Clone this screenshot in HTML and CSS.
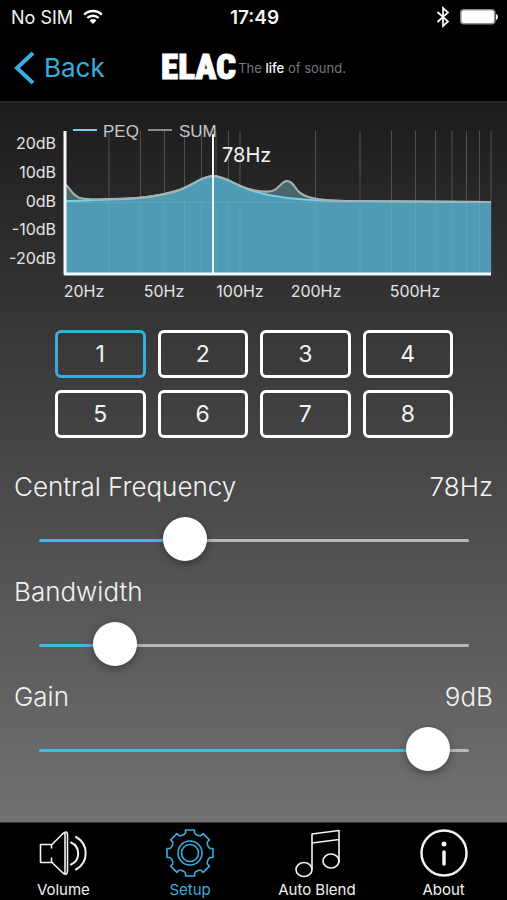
FILE: index.html
```html
<!DOCTYPE html>
<html lang="en">
<head>
  <meta charset="UTF-8">
  <meta name="viewport" content="width=device-width, initial-scale=1.0">
  <title>ELAC - Parametric EQ</title>
  <link rel="stylesheet" href="styles.css">
</head>
<body>
  <div class="status-bar">
    <div class="carrier">
      <span>No SIM</span>
      <svg width="20" height="16" viewBox="0 0 20 16" fill="none" stroke="#fff" stroke-width="2.4">
        <path d="M1.2 5.6a12.6 12.6 0 0 1 17.6 0M4.3 9a8.2 8.2 0 0 1 11.4 0"/>
        <path d="M10 15l-3.4-3.6a4.8 4.8 0 0 1 6.8 0z" fill="#fff" stroke="none"/>
      </svg>
    </div>
    <span class="clock">17:49</span>
    <div class="status-icons">
      <svg width="14" height="22" viewBox="0 0 14 22" fill="none" stroke="#fff" stroke-width="1.7">
        <path d="M1.5 6l10.500 9.500L7 20V2l5 4.500L1.500 16"/>
      </svg>
      <svg width="38" height="16" viewBox="0 0 38 16">
        <rect x="0.800" y="0.800" width="34" height="14" rx="3" fill="#fff" stroke="#8c8c8c" stroke-width="1.600"/>
        <path d="M36 5c2.500 .5 2.500 5.500 0 6z" fill="#fff"/>
      </svg>
    </div>
  </div>

  <header class="nav-bar">
    <a class="back" href="#setup">
      <svg width="22" height="34" viewBox="0 0 22 34" fill="none" stroke="#39aede" stroke-width="4">
        <path d="M19 2L3 17l16 15"/>
      </svg>
      Back
    </a>
    <div class="brand">
      <span class="logo">ELAC</span>
      <span class="slogan">The <b>life</b> of sound.</span>
    </div>
  </header>

  <main>
    <svg class="chart" viewBox="0 0 507 200" role="img" aria-label="Frequency response">
      <!-- frequency grid, log scale 20Hz - 1kHz -->
      <path class="grid" d="M109 21v142M140.500 21v142M164.500 21v142M184.500 21v142M201.500 21v142M216 21v142M228.500 21v142M240 21v142M315.500 21v142M360 21v142M391.500 21v142M415.500 21v142M435.500 21v142M452 21v142M466.500 21v142M479.500 21v142M491 21v142"/>

      <path class="sum-fill" d="M65 74C71 79 73 87 82 88.500C92 90 105 89 109 89C135 89 160 86 176 81C193 76 201 66 213 66C226 66 234 76 253 80C263 82 271 83 276 79C281 75 283 71 287 71C292 71 294 76 298 81C304 88 318 90 345 91L491 92V163H65z"/>
      <path class="peq-fill" d="M65 91C80 91 95 90 109 89.500C135 89 160 86 176 81C193 76 201 66 213 66C226 66 234 75 253 81C275 88 310 91 345 91L491 92V163H65z"/>
      <path class="grid over" d="M109 91v72M140.500 91v72M164.500 91v72M184.500 91v72M201.500 91v72M216 91v72M228.500 91v72M240 91v72M315.500 91v72M360 91v72M391.500 91v72M415.500 91v72M435.500 91v72M452 91v72M466.500 91v72M479.500 91v72M65 92.500h426"/>
      <path class="peq-line" d="M65 91C80 91 95 90 109 89.500C135 89 160 86 176 81C193 76 201 66 213 66C226 66 234 75 253 81C275 88 310 91 345 91L491 92"/>
      <path class="sum-line" d="M65 74C71 79 73 87 82 88.500C92 90 105 89 109 89C135 89 160 86 176 81C193 76 201 66 213 66C226 66 234 76 253 80C263 82 271 83 276 79C281 75 283 71 287 71C292 71 294 76 298 81C304 88 318 90 345 91L491 92"/>

      <!-- axes and the selected frequency -->
      <path class="axis" d="M65 21V164H491"/>
      <path class="marker" d="M213 24V164"/>

      <path class="key-peq" d="M73 20h24"/>
      <text class="key" x="103" y="27">PEQ</text>
      <path class="key-sum" d="M148 20h24"/>
      <text class="key" x="179" y="27">SUM</text>
      <text class="marker-label" x="222" y="52">78Hz</text>

      <g class="y-labels">
        <text x="56" y="39">20dB</text>
        <text x="56" y="68">10dB</text>
        <text x="56" y="97">0dB</text>
        <text x="56" y="125">-10dB</text>
        <text x="56" y="154">-20dB</text>
      </g>
      <g class="x-labels">
        <text x="84" y="187">20Hz</text>
        <text x="164" y="187">50Hz</text>
        <text x="240" y="187">100Hz</text>
        <text x="316" y="187">200Hz</text>
        <text x="415" y="187">500Hz</text>
      </g>
    </svg>

    <div class="bands">
      <button class="active">1</button>
      <button>2</button>
      <button>3</button>
      <button>4</button>
      <button>5</button>
      <button>6</button>
      <button>7</button>
      <button>8</button>
    </div>

    <div class="control">
      <div class="control-head">
        <label for="frequency">Central Frequency</label>
        <output for="frequency">78Hz</output>
      </div>
      <input type="range" id="frequency" min="0" max="100" value="32" style="--fill: 33%">
    </div>
    <div class="control">
      <div class="control-head">
        <label for="bandwidth">Bandwidth</label>
      </div>
      <input type="range" id="bandwidth" min="0" max="100" value="14" style="--fill: 18%">
    </div>
    <div class="control">
      <div class="control-head">
        <label for="gain">Gain</label>
        <output for="gain">9dB</output>
      </div>
      <input type="range" id="gain" min="0" max="100" value="95" style="--fill: 91%">
    </div>
  </main>

  <nav class="tab-bar">
    <a href="#volume">
      <svg viewBox="0 0 50 50">
        <path d="M13.500 20V16.500H2.500V34.500H13.500V30M13.500 17L25 5.500Q29.500 2 29.500 7V43Q29.500 48 25 45L13.500 34M27 5v40"/>
        <path d="M33 14.500a12 12 0 0 1 0 22M38 9a18.500 18.500 0 0 1 0 32.500" stroke-width="2"/>
      </svg>
      Volume
    </a>
    <a href="#setup" class="active">
      <svg viewBox="-25 -25 50 50">
        <path d="M-6-18.500L-4.500-20V-23H4.500V-20L6-18.500L8.800-17.300L11-17.300L13.100-19.400L19.400-13.100L17.300-11L17.300-8.800L18.500-6L20-4.500H23V4.500H20L18.500 6L17.300 8.800L17.300 11L19.400 13.100L13.100 19.400L11 17.300L8.800 17.300L6 18.500L4.500 20V23H-4.500V20L-6 18.500L-8.800 17.300L-11 17.300L-13.100 19.400L-19.400 13.100L-17.300 11L-17.300 8.800L-18.500 6L-20 4.500H-23V-4.500H-20L-18.500-6L-17.300-8.800L-17.300-11L-19.400-13.100L-13.100-19.400L-11-17.300L-8.800-17.300z"/>
        <circle r="12"/>
        <circle r="8.500"/>
      </svg>
      Setup
    </a>
    <a href="#auto-blend">
      <svg viewBox="0 0 50 50">
        <path d="M20 41V6L47 2.500V34M20 15L47 11.500"/>
        <ellipse cx="12" cy="41.500" rx="8" ry="7"/>
        <ellipse cx="39" cy="33" rx="8" ry="7"/>
      </svg>
      Auto Blend
    </a>
    <a href="#about">
      <svg viewBox="-25 -25 50 50">
        <circle r="22.500" stroke-width="2.500"/>
        <circle cy="-9" r="2.500" fill="currentColor" stroke="none"/>
        <path d="M0-1V11" stroke-width="3.500"/>
      </svg>
      About
    </a>
  </nav>
</body>
</html>
```
FILE: styles.css
```css
* {
  box-sizing: border-box;
}
body {
  margin: 0;
  min-height: 100vh;
  display: flex;
  flex-direction: column;
  background: #000;
  color: #f2f2f2;
  font-family: Inter, Roboto, sans-serif;
}
a {
  color: inherit;
  text-decoration: none;
}

/* status bar */
.status-bar {
  display: grid;
  grid-template-columns: 1fr auto 1fr;
  align-items: center;
  height: 34px;
  padding: 0 9px 0 11px;
  font-size: 18px;
}
.carrier,
.status-icons {
  display: flex;
  align-items: center;
  gap: 10px;
}
.status-icons {
  justify-content: flex-end;
}
.clock {
  font-weight: 600;
  font-size: 19px;
}

/* navigation bar */
.nav-bar {
  display: grid;
  grid-template-columns: 1fr auto 1fr;
  align-items: center;
  height: 69px;
  padding: 0 14px;
  border-bottom: 2px solid #262626;
}
.back {
  display: flex;
  align-items: center;
  gap: 8px;
  color: #39aede;
  font-size: 26px;
}
.brand {
  display: flex;
  align-items: center;
  gap: 2px;
}
.logo {
  color: #fff;
  font-family: "Roboto Condensed", "Open Sans Condensed", Roboto, sans-serif;
  font-weight: 900;
  font-size: 35px;
  line-height: 40px;
  -webkit-text-stroke: 1px #fff;
}
.slogan {
  color: #777;
  font-size: 13px;
  white-space: nowrap;
}
.slogan b {
  color: #fff;
  font-weight: 500;
}

main {
  flex: 1;
  padding-top: 7px;
  background: linear-gradient(#1c1c1c, #717171);
}

/* response chart */
.chart {
  display: block;
  width: 100%;
  fill: none;
}
.chart text {
  fill: #e4e4e4;
  font-size: 16px;
}
.chart .key {
  fill: #c8c8c8;
  font-family: "Liberation Sans", sans-serif;
  font-size: 17px;
}
.chart .marker-label {
  fill: #f2f2f2;
  font-size: 20px;
}
.grid {
  stroke: #505050;
}
.grid.over {
  stroke: #5aa5bc;
}
.sum-fill {
  fill: #4a676c;
}
.peq-fill {
  fill: #4e9bb3;
}
.peq-line,
.key-peq {
  stroke: #74d3ea;
  stroke-width: 2;
}
.sum-line {
  stroke: #a8b0b2;
  stroke-width: 2;
}
.key-sum {
  stroke: #8a8a8a;
  stroke-width: 2;
}
.axis {
  stroke: #f4fafc;
  stroke-width: 3;
  stroke-linejoin: round;
}
.marker {
  stroke: #f4fafc;
  stroke-width: 2;
}
.y-labels {
  text-anchor: end;
}
.x-labels {
  text-anchor: middle;
}

/* band buttons */
.bands {
  display: grid;
  grid-template-columns: repeat(4, 1fr);
  gap: 12px;
  padding: 20px 54px 0 55px;
}
.bands button {
  height: 48px;
  padding: 0;
  border: 3px solid #fff;
  border-radius: 6px;
  background: none;
  color: #f2f2f2;
  font-family: inherit;
  font-size: 23px;
}
.bands .active {
  border-color: #39aede;
}

/* sliders */
.bands + .control {
  margin-top: 33px;
}
.control {
  margin-bottom: 14px;
  padding: 0 14px;
}
.control-head {
  display: flex;
  justify-content: space-between;
  margin-bottom: 15px;
  font-size: 26px;
  font-weight: 300;
  line-height: 32px;
}
.control input {
  -webkit-appearance: none;
  appearance: none;
  display: block;
  width: calc(100% - 49px);
  height: 44px;
  margin: 0 24px 0 25px;
  background: none;
}
.control input::-webkit-slider-runnable-track {
  height: 3px;
  border-radius: 2px;
  background: linear-gradient(to right, #42b9e4 var(--fill), #b8b8b8 0);
}
.control input::-webkit-slider-thumb {
  -webkit-appearance: none;
  width: 44px;
  height: 44px;
  margin-top: -22px;
  border-radius: 50%;
  background: #fff;
  box-shadow: 0 3px 8px rgba(0, 0, 0, 0.35);
}

/* tab bar */
.tab-bar {
  display: grid;
  grid-template-columns: repeat(4, 1fr);
  height: 78px;
  padding-top: 5px;
  border-top: 1px solid #333;
  font-size: 15px;
  text-align: center;
}
.tab-bar a {
  display: flex;
  flex-direction: column;
  align-items: center;
  gap: 2px;
}
.tab-bar svg {
  width: 50px;
  height: 50px;
  fill: none;
  stroke: currentColor;
  stroke-width: 1.6;
  stroke-linecap: round;
  stroke-linejoin: round;
}
.tab-bar .active {
  color: #39aede;
}
```
